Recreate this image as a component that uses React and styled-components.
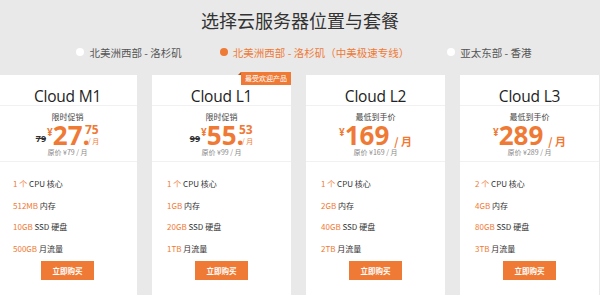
import React from "react"
import styled, { createGlobalStyle } from 'styled-components'

const ORANGE = '#ef7a35'

const Global = createGlobalStyle`
    body {
        margin: 0;
        background: #e9e9e9;
        font-family: "Noto Sans CJK SC", "Noto Sans", sans-serif;
        overflow: hidden;
        height: 295px;
    }
`

const Page = styled.div`
    width: 600px;
    height: 295px;
    overflow: hidden;
`

const Title = styled.h1`
    margin: 0;
    padding-top: 6px;
    height: 28px;
    text-align: center;
    font-size: 18px;
    font-weight: 400;
    line-height: 28px;
    color: #333;
`

const Regions = styled.div`
    display: flex;
    justify-content: center;
    gap: 38px;
    padding-left: 8px;
    height: 36px;
    align-items: center;
`

const Region = styled.div`
    display: flex;
    align-items: center;
    gap: 5px;
    font-size: 10.5px;
    color: ${p => p.active ? ORANGE : '#555'};
`

const Dot = styled.span`
    width: 8px;
    height: 8px;
    border-radius: 50%;
    background: ${p => p.active ? ORANGE : '#fff'};
`

const Cards = styled.div`
    display: flex;
    gap: 15px;
    margin-left: -2px;
    margin-top: 5px;
`

const Card = styled.div`
    position: relative;
    width: 139px;
    flex-shrink: 0;
    height: 240px;
    background: #fff;
    display: flex;
    flex-direction: column;
`

const Badge = styled.div`
    position: absolute;
    top: -3px;
    right: 0;
    height: 13px;
    padding: 0 4px;
    background: ${ORANGE};
    color: #fff;
    font-size: 7px;
    line-height: 13px;
    &::before {
        content: "";
        position: absolute;
        left: -3px;
        top: 0;
        border-bottom: 3px solid #b8521c;
        border-left: 3px solid transparent;
    }
`

const CardTitle = styled.div`
    height: 30px;
    border-bottom: 1px solid #f1f1f1;
    text-align: center;
    font-family: "Open Sans", "Noto Sans", sans-serif;
    font-size: 15.5px;
    letter-spacing: -0.2px;
    line-height: 42px;
    color: #222;
`

const PriceBox = styled.div`
    height: 56px;
    border-bottom: 1px solid #f1f1f1;
    display: flex;
    flex-direction: column;
    align-items: center;
    padding-top: 4px;
    box-sizing: border-box;
`

const Tag = styled.div`
    font-size: 8px;
    color: #444;
    line-height: 14px;
`

const PriceRow = styled.div`
    display: flex;
    align-items: flex-start;
    color: ${ORANGE};
    font-family: "Open Sans", "Noto Sans", sans-serif;
    font-weight: 700;
    height: 22px;
`

const Old = styled.span`
    font-size: 9px;
    line-height: 10px;
    color: #333;
    text-decoration: line-through;
    align-self: flex-end;
    margin-bottom: 2px;
    margin-right: 1px;
`

const Yen = styled.span`
    font-size: 10px;
    line-height: 12px;
    margin-top: 2px;
`

const Big = styled.span`
    font-size: 26px;
    line-height: 22px;
`

const Cents = styled.span`
    display: flex;
    flex-direction: column;
    justify-content: space-between;
    height: 22px;
    font-size: 12px;
    line-height: 12px;
    margin-left: -5px;
`

const Per = styled.span`
    font-family: "Noto Sans CJK SC", sans-serif;
    font-weight: ${p => p.bold ? 700 : 400};
    font-size: ${p => p.bold ? '11px' : '7px'};
    line-height: 10px;
    margin-top: ${p => p.bold ? '12px' : '0'};
    margin-left: ${p => p.bold ? '5px' : '3px'};
`

const Orig = styled.div`
    font-size: 7px;
    color: #888;
    line-height: 12px;
`

const Specs = styled.div`
    padding: 11px 15px 0;
    display: flex;
    flex-direction: column;
`

const Spec = styled.div`
    height: 21.5px;
    line-height: 21.5px;
    font-size: 8px;
    color: #333;
    & b {
        font-weight: 400;
        color: ${ORANGE};
    }
`

const Buy = styled.button`
    align-self: center;
    margin-top: 2px;
    width: 53px;
    height: 19px;
    border: none;
    background: ${ORANGE};
    color: #fff;
    font-family: "Noto Sans CJK SC", sans-serif;
    font-weight: 700;
    font-size: 7.5px;
    padding: 0;
`

const plans = [
    { name: 'Cloud M1', tag: '限时促销', old: '79', int: '27', cents: '75', orig: 79, cpu: '1 个', ram: '512MB', disk: '10GB', bw: '500GB' },
    { name: 'Cloud L1', tag: '限时促销', old: '99', int: '55', cents: '53', orig: 99, cpu: '1 个', ram: '1GB', disk: '20GB', bw: '1TB', hot: true },
    { name: 'Cloud L2', tag: '最低到手价', int: '169', orig: 169, cpu: '1 个', ram: '2GB', disk: '40GB', bw: '2TB' },
    { name: 'Cloud L3', tag: '最低到手价', int: '289', orig: 289, cpu: '2 个', ram: '4GB', disk: '80GB', bw: '3TB' },
]

function Price({ plan }) {
    return (
        <PriceRow>
            {plan.old && <Old>{plan.old}</Old>}
            <Yen>¥</Yen>
            <Big>{plan.cents ? plan.int + '.' : plan.int}</Big>
            {plan.cents ? (
                <Cents>
                    <span>{plan.cents}</span>
                    <Per>/ 月</Per>
                </Cents>
            ) : (
                <Per bold>/ 月</Per>
            )}
        </PriceRow>
    )
}

function App() {
    return (
        <Page>
            <Global />
            <Title>选择云服务器位置与套餐</Title>
            <Regions>
                <Region><Dot />北美洲西部 - 洛杉矶</Region>
                <Region active><Dot active />北美洲西部 - 洛杉矶（中美极速专线）</Region>
                <Region><Dot />亚太东部 - 香港</Region>
            </Regions>
            <Cards>
                {plans.map(p => (
                    <Card key={p.name}>
                        {p.hot && <Badge>最受欢迎产品</Badge>}
                        <CardTitle>{p.name}</CardTitle>
                        <PriceBox>
                            <Tag>{p.tag}</Tag>
                            <Price plan={p} />
                            <Orig>原价 ¥{p.orig} / 月</Orig>
                        </PriceBox>
                        <Specs>
                            <Spec><b>{p.cpu}</b> CPU 核心</Spec>
                            <Spec><b>{p.ram}</b> 内存</Spec>
                            <Spec><b>{p.disk}</b> SSD 硬盘</Spec>
                            <Spec><b>{p.bw}</b> 月流量</Spec>
                        </Specs>
                        <Buy>立即购买</Buy>
                    </Card>
                ))}
            </Cards>
        </Page>
    )
}

export default App
